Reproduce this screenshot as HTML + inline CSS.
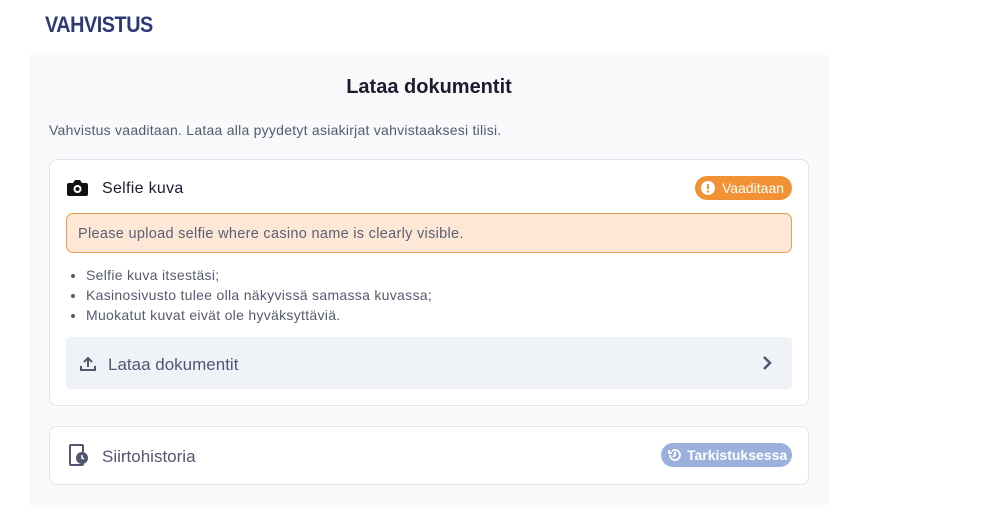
<!DOCTYPE html>
<html><head><meta charset="utf-8"><style>
*{box-sizing:border-box;margin:0;padding:0}
body{width:992px;height:519px;background:#fff;font-family:"Liberation Sans",sans-serif;position:relative;overflow:hidden;color:#1c1c2e}
.abs{position:absolute}
h1{position:absolute;left:45px;top:12px;font-size:22px;font-weight:bold;color:#2b3a74;letter-spacing:-0.5px;transform:scaleX(0.9);transform-origin:left}
.panel{left:29px;top:55px;width:800px;height:450px;background:#f8f9fb}
.card{background:#fff;border:1px solid #e1e4ea;border-radius:8px}
</style></head><body>
<h1>VAHVISTUS</h1>
<div class="abs panel"></div>
<div class="abs" style="left:29px;width:800px;top:76px;text-align:center;font-size:20px;font-weight:bold;color:#1c1c2e">Lataa dokumentit</div>
<div class="abs" style="left:49px;top:122px;font-size:14px;letter-spacing:0.25px;color:#555a6e">Vahvistus vaaditaan. Lataa alla pyydetyt asiakirjat vahvistaaksesi tilisi.</div>
<div class="abs card" style="left:49px;top:159px;width:760px;height:247px"></div>
<svg class="abs" style="left:67px;top:179px" width="21" height="18" viewBox="0 0 21 18"><path d="M2 4h4l2-3h5l2 3h4a2 2 0 0 1 2 2v9a2 2 0 0 1-2 2H2a2 2 0 0 1-2-2V6a2 2 0 0 1 2-2z" fill="#111"/><circle cx="10.5" cy="10" r="4" fill="#fff"/><circle cx="10.5" cy="10" r="2" fill="#111"/></svg>
<div class="abs" style="left:102px;top:180px;font-size:16px;letter-spacing:0.3px;color:#1c1c2e">Selfie kuva</div>
<div class="abs" style="left:695px;top:176px;width:97px;height:24px;border-radius:12px;background:#f39234;color:#fff;font-size:14px;line-height:24px;padding-left:27px">Vaaditaan</div>
<svg class="abs" style="left:701px;top:181px" width="14" height="14" viewBox="0 0 14 14"><circle cx="7" cy="7" r="7" fill="#fff"/><rect x="6" y="3" width="2" height="5" fill="#f39234"/><rect x="6" y="9.5" width="2" height="2" fill="#f39234"/></svg>
<div class="abs" style="left:66px;top:213px;width:726px;height:40px;background:#fde8d7;border:1px solid #ef9a4c;border-radius:7px;font-size:14.5px;letter-spacing:0.3px;color:#5c6073;line-height:40px;padding-left:11px">Please upload selfie where casino name is clearly visible.</div>
<ul class="abs" style="left:86px;top:265px;font-size:14px;letter-spacing:0.3px;color:#555a6e;line-height:20px">
<li>Selfie kuva itsestäsi;</li><li>Kasinosivusto tulee olla näkyvissä samassa kuvassa;</li><li>Muokatut kuvat eivät ole hyväksyttäviä.</li></ul>
<div class="abs" style="left:66px;top:337px;width:726px;height:52px;background:#eff2f7;border-radius:4px"></div>
<svg class="abs" style="left:80px;top:355px" width="16" height="16" viewBox="0 0 16 16"><path d="M8 12V3M4 7l4-4 4 4M1 11v4h14v-4" fill="none" stroke="#525670" stroke-width="2"/></svg>
<div class="abs" style="left:108px;top:355px;font-size:17px;color:#525670">Lataa dokumentit</div>
<svg class="abs" style="left:761px;top:355px" width="12" height="16" viewBox="0 0 12 16"><path d="M3 2l6 6-6 6" fill="none" stroke="#525670" stroke-width="2.5"/></svg>
<div class="abs card" style="left:49px;top:426px;width:760px;height:59px"></div>
<svg class="abs" style="left:69px;top:444px" width="20" height="24" viewBox="0 0 20 24"><rect x="1" y="1" width="13" height="20" rx="1" fill="none" stroke="#525670" stroke-width="2"/><circle cx="13" cy="14" r="6" fill="#525670"/><path d="M13 11v3l2 1" stroke="#fff" stroke-width="1.5" fill="none"/></svg>
<div class="abs" style="left:102px;top:447px;font-size:17px;color:#525670">Siirtohistoria</div>
<div class="abs" style="left:661px;top:443px;width:131px;height:24px;border-radius:12px;background:#9cb0dd;color:#fff;font-size:14px;font-weight:bold;line-height:24px;padding-left:26px">Tarkistuksessa</div>
<svg class="abs" style="left:667px;top:447px" width="16" height="16" viewBox="0 0 16 16"><path d="M3 8a5 5 0 1 0 2-4M2 3v3h3M8 5v3l-2 2" fill="none" stroke="#fff" stroke-width="1.8"/></svg>
</body></html>
